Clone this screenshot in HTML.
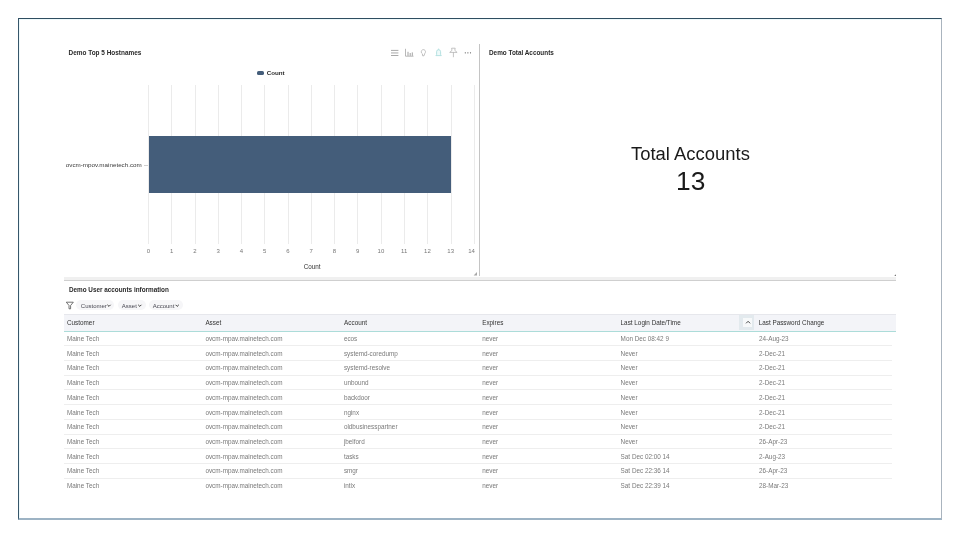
<!DOCTYPE html>
<html><head><meta charset="utf-8">
<style>
*{margin:0;padding:0;box-sizing:border-box}
html,body{width:960px;height:537px;background:#fff;overflow:hidden;font-family:"Liberation Sans",sans-serif}
.a{position:absolute;white-space:nowrap;line-height:1}
.frame{position:absolute;left:18px;top:18px;width:924px;height:502px;border-top:1px solid #2f4d60;border-left:1px solid #36566a;border-right:1px solid #aab4be;border-bottom:2px solid #9db3c4;box-shadow:inset 1px 1px 0 #eef9fb}
.ttl{font-weight:bold;font-size:6.45px;color:#2a2a2a}
.grid{position:absolute;top:85px;height:159px;width:1px;background:#ebebeb}
.tick{position:absolute;top:248px;font-size:6px;color:#777;width:20px;text-align:center;margin-left:-10px}
.hd{position:absolute;top:318.7px;font-size:6.35px;color:#333}
.rowline{position:absolute;left:64px;width:828px;height:1px;background:#eeeeee}
.c{position:absolute;font-size:6.35px;color:#7a7a7a;white-space:nowrap;line-height:1}
</style></head><body><div style="position:absolute;left:0;top:0;width:960px;height:537px;will-change:transform">
<div class="frame"></div>

<!-- top-left panel -->
<div class="a ttl" style="left:68.5px;top:50px">Demo Top 5 Hostnames</div>

<!-- toolbar icons -->
<svg class="a" style="left:0;top:0" width="960" height="537" viewBox="0 0 960 537">
  <g stroke="#8c8c8c" stroke-width="0.75" fill="none">
    <path d="M391 50.4h7.4M391 52.95h7.4M391 55.5h7.4"/>
  </g>
  <g stroke="#9a9a9a" stroke-width="0.7" fill="none">
    <path d="M405.5 48.8V56.2H413.5"/>
    <path d="M408 51.8V55.8M410.2 53V55.8M412.3 52.4V55.8" stroke="#7a7a7a"/>
  </g>
  <path d="M421.3 51.6a2.1 2.1 0 1 1 3.6 1.6l-0.9 2.6h-1.4l-0.2-2a2.1 2.1 0 0 1 -1.1 -2.2z" stroke="#a8a8a8" stroke-width="0.7" fill="none"/>
  <path d="M435.9 55.6h5.4l-0.7-1.1v-2.8a2 2 0 0 0 -4 0v2.8z" stroke="#a6dada" stroke-width="0.8" fill="#eefafa"/>
  <path d="M438.6 48.6v1" stroke="#a6dada" stroke-width="0.8"/>
  <path d="M451.6 48.2h3.6l-0.4 2.2 2.3 2h-7.4l2.3-2z M453.4 52.4V57.2" stroke="#ababab" stroke-width="0.7" fill="none"/>
  <g fill="#555"><circle cx="465.3" cy="52.8" r="0.6"/><circle cx="467.9" cy="52.8" r="0.6"/><circle cx="470.5" cy="52.8" r="0.6"/></g>
</svg>

<!-- legend -->
<div class="a" style="left:257px;top:71px;width:7px;height:4px;border-radius:1.6px;background:#445d7a"></div>
<div class="a" style="left:266.7px;top:69.7px;font-size:6.2px;color:#2a2a2a;font-weight:bold">Count</div>

<!-- chart gridlines -->
<div class="grid" style="left:148px"></div>
<div class="grid" style="left:171px"></div>
<div class="grid" style="left:195px"></div>
<div class="grid" style="left:218px"></div>
<div class="grid" style="left:241px"></div>
<div class="grid" style="left:264px"></div>
<div class="grid" style="left:288px"></div>
<div class="grid" style="left:311px"></div>
<div class="grid" style="left:334px"></div>
<div class="grid" style="left:357px"></div>
<div class="grid" style="left:381px"></div>
<div class="grid" style="left:404px"></div>
<div class="grid" style="left:427px"></div>
<div class="grid" style="left:451px"></div>
<div class="grid" style="left:474px"></div>

<!-- bar -->
<div class="a" style="left:148.5px;top:136px;width:302.5px;height:57px;background:#445d7a"></div>
<div class="a" style="left:144px;top:165px;width:4px;height:1px;background:#d0d0d0"></div>
<div class="a" style="left:65.8px;top:162px;font-size:6.25px;color:#3a3a3a">ovcm-mpov.mainetech.com</div>

<!-- ticks -->
<div class="tick" style="left:148.5px">0</div>
<div class="tick" style="left:171.7px">1</div>
<div class="tick" style="left:195px">2</div>
<div class="tick" style="left:218.2px">3</div>
<div class="tick" style="left:241.5px">4</div>
<div class="tick" style="left:264.7px">5</div>
<div class="tick" style="left:288px">6</div>
<div class="tick" style="left:311.2px">7</div>
<div class="tick" style="left:334.4px">8</div>
<div class="tick" style="left:357.7px">9</div>
<div class="tick" style="left:380.9px">10</div>
<div class="tick" style="left:404.2px">11</div>
<div class="tick" style="left:427.4px">12</div>
<div class="tick" style="left:450.7px">13</div>
<div class="tick" style="left:471.6px">14</div>
<div class="a" style="left:303.8px;top:263.5px;font-size:6.3px;color:#333">Count</div>

<!-- resize handle -->
<svg class="a" style="left:472px;top:270px" width="6" height="6"><path d="M5 2L1.6 5.4H5z" fill="#a8a8a8"/></svg>

<svg class="a" style="left:892px;top:272px" width="5" height="5"><path d="M4 2.2L2.2 4H4z" fill="#777"/></svg>
<!-- separators -->
<div class="a" style="left:479px;top:44px;width:1.2px;height:232px;background:#c4c4c4"></div>
<div class="a" style="left:64px;top:277px;width:832px;height:3px;background:#f0f0f0"></div>
<div class="a" style="left:64px;top:280px;width:832px;height:1px;background:#cfcfcf"></div>

<!-- right panel -->
<div class="a ttl" style="left:489px;top:50px;font-size:6.39px">Demo Total Accounts</div>
<div class="a" style="left:631px;top:145px;font-size:18.45px;color:#1a1a1a">Total Accounts</div>
<div class="a" style="left:676px;top:168.2px;font-size:26.3px;color:#1a1a1a">13</div>

<!-- table panel -->
<div class="a ttl" style="left:68.9px;top:287.3px;font-size:6.36px">Demo User accounts information</div>

<svg class="a" style="left:65px;top:301px" width="10" height="9" viewBox="0 0 10 9"><path d="M1.3 1.2h7L5.6 4.5v3.3H4V4.5z" stroke="#505050" stroke-width="0.8" fill="none" stroke-linejoin="round"/></svg>

<div class="a" style="left:76px;top:300.4px;width:38px;height:9.8px;border-radius:5px;background:#f6f6f8"></div>
<div class="a" style="left:118px;top:300.4px;width:27.7px;height:9.8px;border-radius:5px;background:#f6f6f8"></div>
<div class="a" style="left:149px;top:300.4px;width:33.6px;height:9.8px;border-radius:5px;background:#f6f6f8"></div>
<div class="c" style="left:80.8px;top:302.6px;font-size:6px;color:#484852">Customer</div>
<div class="c" style="left:121.8px;top:302.6px;font-size:6px;color:#484852">Asset</div>
<div class="c" style="left:152.7px;top:302.6px;font-size:6px;color:#484852">Account</div>
<svg class="a" style="left:0;top:0" width="960" height="537">
  <g stroke="#3a3a3a" stroke-width="1" fill="none">
    <path d="M107.4 304.8l1.6 1.6 1.6-1.6"/>
    <path d="M138.2 304.8l1.6 1.6 1.6-1.6"/>
    <path d="M175.6 304.8l1.6 1.6 1.6-1.6"/>
  </g>
</svg>

<!-- table header -->
<div class="a" style="left:64px;top:314px;width:832px;height:17px;background:#f3f4f8;border-top:1px solid #e6e7ec"></div>
<div class="a" style="left:64px;top:331px;width:832px;height:1px;background:#acdcd9"></div>
<div class="a" style="left:739px;top:314.5px;width:14.7px;height:15.5px;background:#e3eaee"></div>
<div class="a" style="left:742.7px;top:318.3px;width:9.4px;height:9.1px;background:#f7f9fa"></div>
<svg class="a" style="left:745px;top:320px" width="6" height="5"><path d="M1.1 3.3l2-2 2 2" stroke="#333" stroke-width="0.9" fill="none"/></svg>
<div class="hd" style="left:67px">Customer</div>
<div class="hd" style="left:205.4px">Asset</div>
<div class="hd" style="left:344.1px">Account</div>
<div class="hd" style="left:482.2px">Expires</div>
<div class="hd" style="left:620.6px">Last Login Date/Time</div>
<div class="hd" style="left:758.7px">Last Password Change</div>

<!-- rows -->
<div>
<div class="c" style="left:66.9px;top:335.88px">Maine Tech</div>
<div class="c" style="left:205.4px;top:335.88px">ovcm-mpav.mainetech.com</div>
<div class="c" style="left:343.9px;top:335.88px">ecos</div>
<div class="c" style="left:482.2px;top:335.88px">never</div>
<div class="c" style="left:620.6px;top:335.88px">Mon Dec 08:42 9</div>
<div class="c" style="left:759px;top:335.88px">24-Aug-23</div>
<div class="rowline" style="top:345px"></div>
<div class="c" style="left:66.9px;top:350.61px">Maine Tech</div>
<div class="c" style="left:205.4px;top:350.61px">ovcm-mpav.mainetech.com</div>
<div class="c" style="left:343.9px;top:350.61px">systemd-coredump</div>
<div class="c" style="left:482.2px;top:350.61px">never</div>
<div class="c" style="left:620.6px;top:350.61px">Never</div>
<div class="c" style="left:759px;top:350.61px">2-Dec-21</div>
<div class="rowline" style="top:360px"></div>
<div class="c" style="left:66.9px;top:365.33px">Maine Tech</div>
<div class="c" style="left:205.4px;top:365.33px">ovcm-mpav.mainetech.com</div>
<div class="c" style="left:343.9px;top:365.33px">systemd-resolve</div>
<div class="c" style="left:482.2px;top:365.33px">never</div>
<div class="c" style="left:620.6px;top:365.33px">Never</div>
<div class="c" style="left:759px;top:365.33px">2-Dec-21</div>
<div class="rowline" style="top:375px"></div>
<div class="c" style="left:66.9px;top:380.06px">Maine Tech</div>
<div class="c" style="left:205.4px;top:380.06px">ovcm-mpav.mainetech.com</div>
<div class="c" style="left:343.9px;top:380.06px">unbound</div>
<div class="c" style="left:482.2px;top:380.06px">never</div>
<div class="c" style="left:620.6px;top:380.06px">Never</div>
<div class="c" style="left:759px;top:380.06px">2-Dec-21</div>
<div class="rowline" style="top:389px"></div>
<div class="c" style="left:66.9px;top:394.78px">Maine Tech</div>
<div class="c" style="left:205.4px;top:394.78px">ovcm-mpav.mainetech.com</div>
<div class="c" style="left:343.9px;top:394.78px">backdoor</div>
<div class="c" style="left:482.2px;top:394.78px">never</div>
<div class="c" style="left:620.6px;top:394.78px">Never</div>
<div class="c" style="left:759px;top:394.78px">2-Dec-21</div>
<div class="rowline" style="top:404px"></div>
<div class="c" style="left:66.9px;top:409.51px">Maine Tech</div>
<div class="c" style="left:205.4px;top:409.51px">ovcm-mpav.mainetech.com</div>
<div class="c" style="left:343.9px;top:409.51px">nginx</div>
<div class="c" style="left:482.2px;top:409.51px">never</div>
<div class="c" style="left:620.6px;top:409.51px">Never</div>
<div class="c" style="left:759px;top:409.51px">2-Dec-21</div>
<div class="rowline" style="top:419px"></div>
<div class="c" style="left:66.9px;top:424.24px">Maine Tech</div>
<div class="c" style="left:205.4px;top:424.24px">ovcm-mpav.mainetech.com</div>
<div class="c" style="left:343.9px;top:424.24px">oldbusinesspartner</div>
<div class="c" style="left:482.2px;top:424.24px">never</div>
<div class="c" style="left:620.6px;top:424.24px">Never</div>
<div class="c" style="left:759px;top:424.24px">2-Dec-21</div>
<div class="rowline" style="top:434px"></div>
<div class="c" style="left:66.9px;top:438.96px">Maine Tech</div>
<div class="c" style="left:205.4px;top:438.96px">ovcm-mpav.mainetech.com</div>
<div class="c" style="left:343.9px;top:438.96px">jbelford</div>
<div class="c" style="left:482.2px;top:438.96px">never</div>
<div class="c" style="left:620.6px;top:438.96px">Never</div>
<div class="c" style="left:759px;top:438.96px">26-Apr-23</div>
<div class="rowline" style="top:448px"></div>
<div class="c" style="left:66.9px;top:453.69px">Maine Tech</div>
<div class="c" style="left:205.4px;top:453.69px">ovcm-mpav.mainetech.com</div>
<div class="c" style="left:343.9px;top:453.69px">tasks</div>
<div class="c" style="left:482.2px;top:453.69px">never</div>
<div class="c" style="left:620.6px;top:453.69px">Sat Dec 02:00 14</div>
<div class="c" style="left:759px;top:453.69px">2-Aug-23</div>
<div class="rowline" style="top:463px"></div>
<div class="c" style="left:66.9px;top:468.41px">Maine Tech</div>
<div class="c" style="left:205.4px;top:468.41px">ovcm-mpav.mainetech.com</div>
<div class="c" style="left:343.9px;top:468.41px">smgr</div>
<div class="c" style="left:482.2px;top:468.41px">never</div>
<div class="c" style="left:620.6px;top:468.41px">Sat Dec 22:36 14</div>
<div class="c" style="left:759px;top:468.41px">26-Apr-23</div>
<div class="rowline" style="top:478px"></div>
<div class="c" style="left:66.9px;top:483.14px">Maine Tech</div>
<div class="c" style="left:205.4px;top:483.14px">ovcm-mpav.mainetech.com</div>
<div class="c" style="left:343.9px;top:483.14px">intlx</div>
<div class="c" style="left:482.2px;top:483.14px">never</div>
<div class="c" style="left:620.6px;top:483.14px">Sat Dec 22:39 14</div>
<div class="c" style="left:759px;top:483.14px">28-Mar-23</div>
</div>
</div></body></html>
